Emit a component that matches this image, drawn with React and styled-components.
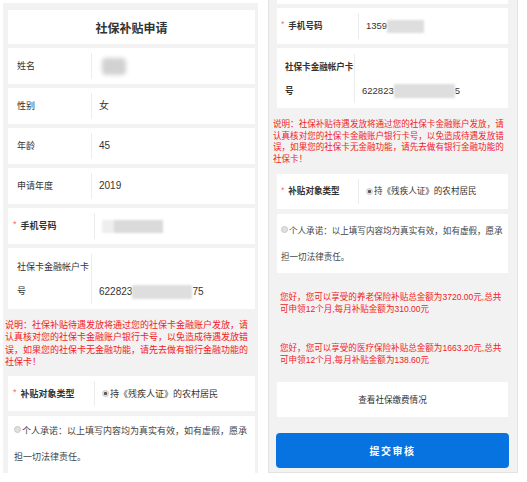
import React from "react";
import styled, { createGlobalStyle } from "styled-components";

const GlobalStyle = createGlobalStyle`
  html, body {
    margin: 0;
    padding: 0;
    background: #fff;
  }
  body {
    font-family: "Liberation Sans", "Noto Sans CJK SC", sans-serif;
    color: #333;
  }
`;

const Page = styled.div`
  display: flex;
  align-items: flex-start;
  gap: 10px;
  padding-left: 3px;
`;

// the two phone captures are scaled a little differently, so sizes live in variables
const Panel = styled.div`
  --fs: ${p => (p.$narrow ? "8.55px" : "9px")};
  --vfs: ${p => (p.$narrow ? "9.5px" : "10px")};
  --lw: ${p => (p.$narrow ? "78px" : "84px")};
  --lwr: ${p => (p.$narrow ? "82px" : "87px")};
  --lp: ${p => (p.$narrow ? "8px" : "9px")};
  --rp: ${p => (p.$narrow ? "4px" : "5px")};
  --lh: ${p => (p.$narrow ? "11.7px" : "12.3px")};
  --cp: ${p => (p.$narrow ? "4px" : "6px")};

  box-sizing: border-box;
  flex: none;
  display: flex;
  flex-direction: column;
  overflow: hidden;
  background: #f2f2f2;
  width: ${p => (p.$narrow ? 250 : 255)}px;
  height: ${p => (p.$narrow ? 473 : 470)}px;
  margin-top: ${p => (p.$narrow ? 0 : 3)}px;
  padding: ${p => (p.$narrow ? "0 9px 4px 8px" : "7px 3px 0 5px")};
  border: ${p => (p.$narrow ? "1px solid #e3e3e3" : "none")};
  border-top: none;
`;

const TitleCard = styled.div`
  flex: none;
  height: 34px;
  background: #fff;
  display: flex;
  align-items: center;
  justify-content: center;
  font-size: 12px;
  font-weight: 700;
  color: #333;
`;

const Stub = styled.div`
  flex: none;
  height: 4px;
  background: #fff;
`;

const Row = styled.div`
  flex: none;
  box-sizing: border-box;
  display: flex;
  align-items: ${p => (p.$tall ? "flex-end" : "center")};
  background: #fff;
  height: ${p => p.$h || 36}px;
  padding: ${p => (p.$tall ? "6px 0 5px" : "5px 0")};
  margin-top: ${p => p.$mt ?? 4}px;
`;

const Label = styled.div`
  flex: none;
  box-sizing: border-box;
  align-self: stretch;
  display: flex;
  align-items: center;
  width: ${p => (p.$required ? "var(--lwr)" : "var(--lw)")};
  padding-left: ${p => (p.$required ? "var(--rp)" : "var(--lp)")};
  border-right: 1px solid #ececec;
  font-size: var(--fs);
  line-height: 24px;
  font-weight: ${p => (p.$bold || p.$required ? 700 : 400)};
  color: #333;
`;

const Star = styled.span`
  color: #f66;
  font-weight: 400;
  margin-right: 4px;
  align-self: flex-start;
  line-height: 22px;
`;

const Value = styled.div`
  display: flex;
  align-items: center;
  padding-left: 7px;
  font-size: var(--vfs);
  line-height: 24px;
  color: #333;
`;

const Blur = styled.span`
  display: inline-block;
  width: ${p => p.$w}px;
  height: ${p => p.$h || 14}px;
  margin-left: ${p => p.$ml || 0}px;
  background: ${p => p.$bg || "#dedede"};
  filter: blur(${p => p.$r || 1.2}px);
  border-radius: ${p => p.$round || 0}px;
`;

const Note = styled.p`
  flex: none;
  margin: ${p => p.$mt}px 0 0 ${p => p.$ml || 0}px;
  padding: ${p => p.$pad || 0};
  font-size: var(--fs);
  line-height: ${p => p.$lh || "var(--lh)"};
  color: #f3201e;
`;

const Radio = styled.span`
  flex: none;
  display: inline-block;
  box-sizing: border-box;
  width: 7px;
  height: 7px;
  border-radius: 50%;
  border: 1px solid #c8c8c8;
  background: ${p =>
    p.$checked
      ? "radial-gradient(circle, #555 0 1.3px, #e2e2e2 1.8px)"
      : "#e0e0e0"};
  margin-right: 1px;
  vertical-align: 1px;
`;

const RadioText = styled.span`
  font-size: var(--fs);
  color: #333;
`;

const PromiseCard = styled.div`
  flex: none;
  margin-top: 5px;
  background: #fff;
  padding: ${p => p.$pad};
  font-size: var(--fs);
  line-height: 26px;
  color: #444;
`;

const LinkCard = styled.div`
  flex: none;
  margin-top: 16px;
  height: 35px;
  background: #fff;
  display: flex;
  align-items: center;
  justify-content: center;
  font-size: var(--fs);
  color: #333;
`;

const SubmitButton = styled.button`
  flex: none;
  margin: 16px -1px 0;
  height: 35px;
  border: none;
  border-radius: 4px;
  background: #0773e0;
  color: #fff;
  font-family: inherit;
  font-size: 10px;
  font-weight: 700;
  letter-spacing: 1.5px;
`;

const EXPLAIN =
  "说明：社保补贴待遇发放将通过您的社保卡金融账户发放，请认真核对您的社保卡金融账户银行卡号，以免造成待遇发放错误，如果您的社保卡无金融功能，请先去做有银行金融功能的社保卡！";
const PROMISE = "个人承诺：以上填写内容均为真实有效，如有虚假，愿承担一切法律责任。";

function SubsidyType({ mt, h }) {
  return (
    <Row $mt={mt} $h={h}>
      <Label $required>
        <Star>*</Star>补贴对象类型
      </Label>
      <Value>
        <Radio $checked />
        <RadioText>持《残疾人证》的农村居民</RadioText>
      </Value>
    </Row>
  );
}

export default function App() {
  return (
    <>
      <GlobalStyle />
      <Page>
        <Panel>
          <TitleCard>社保补贴申请</TitleCard>
          <Row>
            <Label>姓名</Label>
            <Value>
              <Blur $w={24} $h={17} $ml={3} $bg="#d2d2d2" $r={2} $round={4} />
            </Value>
          </Row>
          <Row>
            <Label>性别</Label>
            <Value>女</Value>
          </Row>
          <Row>
            <Label>年龄</Label>
            <Value>45</Value>
          </Row>
          <Row>
            <Label>申请年度</Label>
            <Value>2019</Value>
          </Row>
          <Row>
            <Label $required>
              <Star>*</Star>手机号码
            </Label>
            <Value>
              <Blur $w={61} $h={13} $bg="linear-gradient(90deg, #eeeeee 0 20%, #dadada 20%)" />
            </Value>
          </Row>
          <Row $tall $h={61}>
            <Label>社保卡金融帐户卡号</Label>
            <Value>
              622823
              <Blur $w={60} />
              75
            </Value>
          </Row>
          <Note $mt={10} $ml={-3}>{EXPLAIN}</Note>
          <SubsidyType mt={8} h={35} />
          <PromiseCard $pad="2px 6px 8px">
            <Radio />
            {PROMISE}
          </PromiseCard>
        </Panel>

        <Panel $narrow>
          <Stub />
          <Row>
            <Label $required>
              <Star>*</Star>手机号码
            </Label>
            <Value>
              1359
              <Blur $w={37} $h={13} />
            </Value>
          </Row>
          <Row $tall $h={60}>
            <Label $bold>社保卡金融帐户卡号</Label>
            <Value>
              622823
              <Blur $w={61} />
              5
            </Value>
          </Row>
          <Note $mt={11} $ml={-4}>{EXPLAIN}</Note>
          <SubsidyType mt={8} h={35} />
          <PromiseCard $pad="4px 3px 3px 4px">
            <Radio />
            {PROMISE}
          </PromiseCard>
          <Note $mt={18} $pad="0 1px 0 3px" $lh="12px">
            您好，您可以享受的养老保险补贴总金额为3720.00元,总共可申领12个月,每月补贴金额为310.00元
          </Note>
          <Note $mt={27} $pad="0 1px 0 3px" $lh="12px">
            您好，您可以享受的医疗保险补贴总金额为1663.20元,总共可申领12个月,每月补贴金额为138.60元
          </Note>
          <LinkCard>查看社保缴费情况</LinkCard>
          <SubmitButton>提交审核</SubmitButton>
        </Panel>
      </Page>
    </>
  );
}
